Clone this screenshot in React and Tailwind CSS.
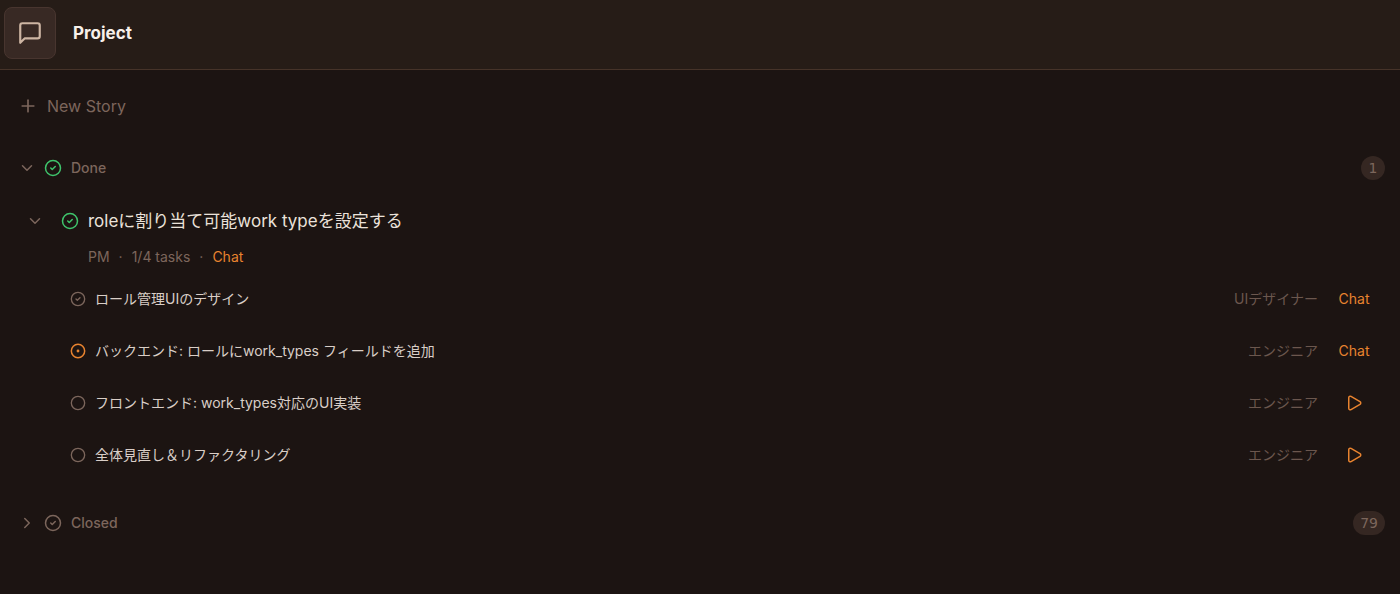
import { ChevronDown, ChevronRight, Circle, CircleCheck, CircleDot, Play, Plus } from "lucide-react";

const tasks = [
  { id: 1, title: "ロール管理UIのデザイン", role: "UIデザイナー", status: "done" },
  { id: 2, title: "バックエンド: ロールにwork_types フィールドを追加", role: "エンジニア", status: "active" },
  { id: 3, title: "フロントエンド: work_types対応のUI実装", role: "エンジニア", status: "todo" },
  { id: 4, title: "全体見直し＆リファクタリング", role: "エンジニア", status: "todo" },
];

function MessageIcon() {
  return (
    <svg viewBox="0 0 24 24" className="size-[26px]" fill="none" stroke="currentColor" strokeWidth="2" strokeLinecap="round" strokeLinejoin="round" aria-hidden="true">
      <path d="M21 15a2 2 0 0 1-2 2H7l-4 4V5a2 2 0 0 1 2-2h14a2 2 0 0 1 2 2z" />
    </svg>
  );
}

function StatusIcon({ status }) {
  if (status === "done") return <CircleCheck className="size-4 shrink-0 text-[#7c665c]" />;
  if (status === "active") return <CircleDot className="size-4 shrink-0 text-[#e8832f]" strokeWidth={2.25} />;
  return <Circle className="size-4 shrink-0 text-[#7c665c]" />;
}

function SectionHeader({ open, label, count, done }) {
  const Chevron = open ? ChevronDown : ChevronRight;
  return (
    <button type="button" aria-expanded={open} className="flex h-12 w-full items-center pr-[15px] pl-[18px] text-left">
      <Chevron className="size-[18px] text-[#7c665c]" />
      <CircleCheck className={done ? "ml-2 size-[18px] text-[#3fc46c]" : "ml-2 size-[18px] text-[#7c665c]"} />
      <span className="ml-[9px] text-[14px] leading-6 font-medium text-[#7c665c]">{label}</span>
      <span className="ml-auto flex h-6 min-w-6 items-center justify-center rounded-full bg-[#352722] px-[7px] font-['DejaVu_Sans',sans-serif] text-[14px] leading-6 text-[#7c665c]">
        {count}
      </span>
    </button>
  );
}

function Task({ task }) {
  return (
    <li className="flex h-[52px] items-center pr-[30px] pl-[70px] text-[14px] leading-6">
      <StatusIcon status={task.status} />
      <span className="ml-[9px] min-w-0 flex-1 truncate text-[#d9cec7]">{task.title}</span>
      <span className="text-[#6b574e]">{task.role}</span>
      <span className="ml-5 flex w-8 justify-center">
        {task.status === "todo" ? (
          <button type="button" aria-label="Start task" className="text-[#e8832f]">
            <Play className="size-[18px]" />
          </button>
        ) : (
          <a href="#chat" className="text-[#e8832f]">Chat</a>
        )}
      </span>
    </li>
  );
}

export default function App() {
  return (
    <div className="min-h-screen bg-[#1c1412] font-[Inter,'Noto_Sans_CJK_JP',sans-serif]">
      <header className="flex h-[70px] items-center border-b border-[#463329] bg-[#261c17] px-1 pb-[3px]">
        <button type="button" aria-label="Open chat" className="flex size-[52px] items-center justify-center rounded-lg border border-[#48352f] bg-[#382924] text-[#cdb5a3]">
          <MessageIcon />
        </button>
        <h1 className="ml-[17px] text-[17px] leading-7 font-bold text-[#f7f0ea]">Project</h1>
      </header>

      <main>
        <button type="button" className="mb-[2px] flex h-[72px] w-full items-center pl-[18px] text-left text-[16px] leading-6 text-[#7c665c]">
          <Plus className="size-5" />
          <span className="ml-[9px]">New Story</span>
        </button>

        <section>
          <SectionHeader open label="Done" count={1} done />
          <article className="pt-3">
            <div className="flex h-[34px] items-center pl-[26px]">
              <button type="button" aria-label="Collapse story" className="text-[#7c665c]">
                <ChevronDown className="size-[18px]" />
              </button>
              <CircleCheck className="ml-[17px] size-[18px] text-[#3fc46c]" />
              <h2 className="ml-[9px] text-[17px] leading-7 text-[#ebe2da]">roleに割り当て可能work typeを設定する</h2>
            </div>
            <p className="flex h-[38px] items-center gap-[9px] pl-[88px] text-[14px] leading-6 text-[#7c665c]">
              <span>PM</span>
              <span>·</span>
              <span>1/4 tasks</span>
              <span>·</span>
              <a href="#chat" className="text-[#e8832f]">Chat</a>
            </p>
            <ul className="-mt-[3px]">
              {tasks.map((task) => (
                <Task key={task.id} task={task} />
              ))}
            </ul>
          </article>
        </section>

        <section className="pt-[18px]">
          <SectionHeader open={false} label="Closed" count={79} />
        </section>
      </main>
    </div>
  );
}
